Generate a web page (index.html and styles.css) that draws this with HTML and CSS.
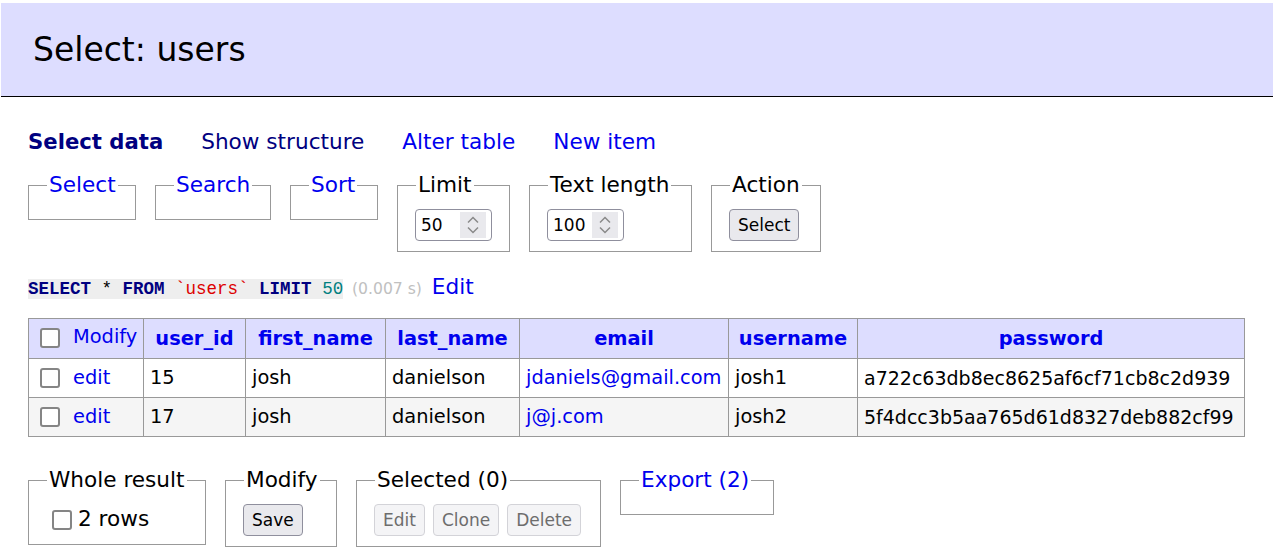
FILE: index.html
```html
<!DOCTYPE html>
<html lang="en">
<head>
<meta charset="utf-8">
<title>Select: users</title>
<link rel="stylesheet" href="styles.css">
</head>
<body>
<header class="page-head"><h2>Select: users</h2></header>
<main class="content">
  <p class="links">
    <a class="current" href="#">Select data</a>
    <a class="visited" href="#">Show structure</a>
    <a href="#">Alter table</a>
    <a href="#">New item</a>
  </p>

  <form class="fs-row filters">
    <fieldset class="fs w-select"><legend><a href="#">Select</a></legend></fieldset>
    <fieldset class="fs w-search"><legend><a href="#">Search</a></legend></fieldset>
    <fieldset class="fs w-sort"><legend><a href="#">Sort</a></legend></fieldset>
    <fieldset class="fs w-limit"><legend>Limit</legend>
      <div class="num"><span class="num-val">50</span><span class="spin"><svg viewBox="0 0 26 26" width="26" height="26"><path d="M8 10.5 L13 5.5 L18 10.5 M8 15.5 L13 20.5 L18 15.5" fill="none" stroke="#8a8a8a" stroke-width="1.5"/></svg></span></div>
    </fieldset>
    <fieldset class="fs w-text"><legend>Text length</legend>
      <div class="num"><span class="num-val">100</span><span class="spin"><svg viewBox="0 0 26 26" width="26" height="26"><path d="M8 10.5 L13 5.5 L18 10.5 M8 15.5 L13 20.5 L18 15.5" fill="none" stroke="#8a8a8a" stroke-width="1.5"/></svg></span></div>
    </fieldset>
    <fieldset class="fs w-action"><legend>Action</legend>
      <button type="button" class="btn">Select</button>
    </fieldset>
  </form>

  <p class="sql"><code class="jush"><b>SELECT</b> * <b>FROM</b> <span class="str">`users`</span> <b>LIMIT</b> <span class="num-lit">50</span></code> <span class="time">(0.007 s)</span> <a href="#">Edit</a></p>

  <table class="grid">
    <colgroup>
      <col class="k-mod"><col class="k-id"><col class="k-first"><col class="k-last"><col class="k-email"><col class="k-user"><col class="k-pass">
    </colgroup>
    <thead>
      <tr>
        <th class="mod"><input type="checkbox" class="cb"><a href="#">Modify</a></th>
        <th><a href="#">user_id</a></th>
        <th><a href="#">first_name</a></th>
        <th><a href="#">last_name</a></th>
        <th><a href="#">email</a></th>
        <th><a href="#">username</a></th>
        <th><a href="#">password</a></th>
      </tr>
    </thead>
    <tbody>
      <tr>
        <td class="mod"><input type="checkbox" class="cb"><a href="#">edit</a></td>
        <td>15</td>
        <td>josh</td>
        <td>danielson</td>
        <td><a class="mail" href="#">jdaniels@gmail.com</a></td>
        <td>josh1</td>
        <td class="hash">a722c63db8ec8625af6cf71cb8c2d939</td>
      </tr>
      <tr class="odd">
        <td class="mod"><input type="checkbox" class="cb"><a href="#">edit</a></td>
        <td>17</td>
        <td>josh</td>
        <td>danielson</td>
        <td><a class="mail" href="#">j@j.com</a></td>
        <td>josh2</td>
        <td class="hash">5f4dcc3b5aa765d61d8327deb882cf99</td>
      </tr>
    </tbody>
  </table>

  <form class="fs-row bottom">
    <fieldset class="fs w-whole"><legend>Whole result</legend>
      <label class="all"><input type="checkbox" class="cb">2 rows</label>
    </fieldset>
    <fieldset class="fs w-modify"><legend>Modify</legend>
      <button type="button" class="btn">Save</button>
    </fieldset>
    <fieldset class="fs w-selected"><legend>Selected (0)</legend>
      <div class="btns">
        <button type="button" class="btn" disabled>Edit</button>
        <button type="button" class="btn" disabled>Clone</button>
        <button type="button" class="btn" disabled>Delete</button>
      </div>
    </fieldset>
    <fieldset class="fs w-export"><legend><a href="#">Export (2)</a></legend></fieldset>
  </form>
</main>
</body>
</html>
```

FILE: styles.css
```css
* { box-sizing: border-box; }

html, body {
  margin: 0;
  padding: 0;
  background: #fff;
}

body {
  font-family: "DejaVu Sans", Verdana, sans-serif;
  font-size: 21.6px;
  line-height: 24px;
  color: #000;
}

a { color: #0000ee; text-decoration: none; }

.page-head {
  margin: 3px 0 0 1px;
  height: 94px;
  background: #ddf;
  border-bottom: 1px solid #000;
  display: flex;
  align-items: center;
}

.page-head h2 {
  margin: 0;
  padding-left: 32px;
  font-size: 33px;
  font-weight: normal;
  line-height: 40px;
}

.content {
  padding-left: 28px;
}

.links {
  margin: 33px 0 0;
  display: flex;
  align-items: baseline;
  gap: 38px;
  font-size: 21.6px;
}

.links a.current { color: #000080; font-weight: bold; font-size: 21.2px; }
.links a.visited { color: #000080; }

.fs-row {
  display: flex;
  align-items: flex-start;
  gap: 19px;
}

.filters { margin-top: 19px; }

.fs {
  margin: 0;
  padding: 12px 17px 10px;
  border: 1px solid #999;
  min-inline-size: 0;
}

.fs legend {
  padding: 0 2px;
  margin-left: 1px;
  line-height: 24px;
}

.w-select { width: 108px; }
.w-search { width: 116px; }
.w-sort { width: 88px; }
.w-limit { width: 113px; }
.w-text { width: 163px; }
.w-action { width: 110px; }

.w-whole { width: 178px; }
.w-modify { width: 112px; }
.w-selected { width: 245px; }
.w-export { width: 154px; }

.num {
  width: 77px;
  height: 32px;
  border: 1px solid #8f8f9d;
  border-radius: 4px;
  background: #fff;
  display: flex;
  align-items: center;
  justify-content: space-between;
  padding: 0 5px 0 5px;
  font-size: 17px;
}

.spin {
  width: 26px;
  height: 26px;
  background: #e9e9ed;
  display: block;
}

.spin svg { display: block; }

.btn {
  height: 32px;
  padding: 0 8px;
  border: 1px solid #8f8f9d;
  border-radius: 4px;
  background: #e9e9ed;
  color: #000;
  font-family: "DejaVu Sans", Verdana, sans-serif;
  font-size: 17px;
  line-height: 30px;
}

.btn:disabled {
  background: #f4f4f6;
  border-color: #d3d3d8;
  color: #6d6d6d;
}

.btns {
  display: flex;
  gap: 8px;
}

.sql {
  margin: 23px 0 0;
  line-height: 24px;
}

.jush {
  font-family: "Liberation Mono", "Courier New", monospace;
  font-size: 17.5px;
  background: #eee;
}

.jush b { color: #000080; }
.jush .str { color: #d00; }
.jush .num-lit { color: #008080; }

.time {
  color: #c0c0c0;
  font-size: 15.6px;
  margin: 0 3px 0 2px;
}

.grid {
  margin-top: 17px;
  border-collapse: collapse;
  table-layout: fixed;
  width: 1217px;
  font-size: 19.4px;
}

.k-mod { width: 115px; }
.k-id { width: 102px; }
.k-first { width: 140px; }
.k-last { width: 134px; }
.k-email { width: 209px; }
.k-user { width: 129px; }
.k-pass { width: 387px; }

.grid th, .grid td {
  border: 1px solid #999;
  padding: 0 6px;
  white-space: nowrap;
  vertical-align: middle;
}

.grid th {
  background: #ddf;
  height: 40px;
  font-weight: bold;
  text-align: center;
}

.grid td {
  height: 39px;
  text-align: left;
}

.grid td.hash { font-size: 19px; }

.grid tr.odd td { background: #f5f5f5; }

.grid .mod {
  text-align: left;
  font-weight: normal;
}

.grid th.mod a { position: relative; top: -2px; }

.cb {
  appearance: none;
  -webkit-appearance: none;
  width: 20px;
  height: 20px;
  margin: 0 13px 0 5px;
  border: 2px solid #858585;
  border-radius: 3px;
  background: #fff;
  vertical-align: middle;
  position: relative;
  top: -1px;
}

.bottom { margin-top: 31px; }

.all {
  display: flex;
  align-items: center;
  height: 30px;
}

.all .cb {
  margin: 0 6px 0 6px;
  top: 1px;
}
```
